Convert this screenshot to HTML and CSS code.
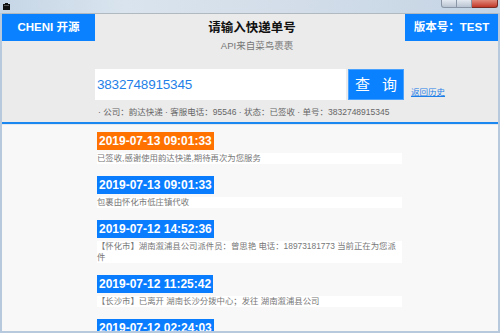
FILE: index.html
```html
<!DOCTYPE html>
<html lang="zh-CN">
<head>
    <meta charset="UTF-8">
    <title>快递查询</title>
    <link rel="stylesheet" href="styles.css">
</head>
<body>

<!--标题栏-->
<div class="titlebar">
    <svg class="app-icon" width="7" height="7" viewBox="0 0 7 7">
        <rect x="0" y="1" width="7" height="6" fill="#111"/>
        <rect x="2" y="0" width="3" height="2" fill="#111"/>
        <rect x="1" y="2" width="5" height="1" fill="#555"/>
    </svg>
    <div class="win-btns">
        <span class="win-btn win-min"></span>
        <span class="win-btn win-max"></span>
        <span class="win-btn win-close"></span>
    </div>
</div>

<div class="window">
    <!--上边的查询区域-->
    <div class="header">
        <div class="top-row">
            <div class="badge">CHENI 开源</div>
            <div class="title-box">
                <h1 class="title">请输入快递单号</h1>
                <p class="subtitle">API来自菜鸟裹裹</p>
            </div>
            <div class="badge">版本号：TEST</div>
        </div>

        <div class="search-row">
            <div class="search-input">3832748915345</div>
            <div class="search-btn">查 询</div>
            <a class="history-link" href="">返回历史</a>
        </div>

        <p class="info">· 公司：韵达快递 · 客服电话：95546 · 状态：已签收 · 单号：3832748915345</p>
    </div>

    <!--下边的物流记录-->
    <div class="timeline">
        <div class="entry">
            <span class="time time-last">2019-07-13 09:01:33</span>
            <p class="desc">已签收,感谢使用韵达快递,期待再次为您服务</p>
        </div>
        <div class="entry">
            <span class="time">2019-07-13 09:01:33</span>
            <p class="desc">包裹由怀化市低庄镇代收</p>
        </div>
        <div class="entry">
            <span class="time">2019-07-12 14:52:36</span>
            <p class="desc">【怀化市】湖南溆浦县公司派件员：曾思艳 电话：18973181773 当前正在为您派件</p>
        </div>
        <div class="entry">
            <span class="time">2019-07-12 11:25:42</span>
            <p class="desc">【长沙市】已离开 湖南长沙分拨中心；发往 湖南溆浦县公司</p>
        </div>
        <div class="entry">
            <span class="time">2019-07-12 02:24:03</span>
        </div>
    </div>
</div>

</body>
</html>
```

FILE: styles.css
```css
* {
    margin: 0;
    padding: 0;
    box-sizing: border-box;
}

html, body {
    width: 500px;
    height: 333px;
    overflow: hidden;
}

body {
    font-family: "Liberation Sans", "Noto Sans CJK SC", sans-serif;
    background-color: #c9d8e6;
    display: flex;
    flex-direction: column;
}

/*标题栏*/
.titlebar {
    height: 13px;
    display: flex;
    align-items: flex-start;
    background: linear-gradient(90deg, #c6d6e6 0%, #d9e4ee 25%, #d2dde9 60%, #c4d4e4 100%);
}

.app-icon {
    margin: 3px 0 0 3px;
}

.win-btns {
    margin-left: auto;
    margin-right: 2px;
    display: flex;
}

.win-btn {
    height: 8px;
    border: 1px solid #8a96a6;
    border-top: none;
    background: linear-gradient(#e4e9f0, #b9c4d2);
}

.win-min {
    width: 16px;
    border-radius: 0 0 0 3px;
}

.win-max {
    width: 15px;
    border-left: none;
}

.win-close {
    width: 26px;
    border-left: none;
    border-color: #7a2a22;
    border-radius: 0 0 3px 0;
    background: linear-gradient(#e08a7c, #c2392a);
}

/*窗口主体*/
.window {
    flex: 1;
    display: flex;
    flex-direction: column;
    border: 2px solid #b7c9dc;
    border-top: none;
    min-height: 0;
}

.header {
    height: 111px;
    background-color: #ebebeb;
    border-top: 1px solid #b0b8c0;
    border-bottom: 2px solid #1a86f0;
}

.top-row {
    display: flex;
    align-items: flex-start;
}

.badge {
    width: 93px;
    height: 27px;
    line-height: 27px;
    background-color: #0a82ff;
    color: #fff;
    font-size: 11.5px;
    font-weight: bold;
    text-align: center;
}

.title-box {
    flex: 1;
    text-align: center;
    padding-top: 6px;
}

.title {
    font-size: 12.5px;
    line-height: 16px;
    color: #111;
    padding-left: 4px;
}

.subtitle {
    font-size: 9.5px;
    line-height: 13px;
    color: #777;
    margin-top: 3px;
    padding-left: 14px;
}

.search-row {
    display: flex;
    align-items: flex-end;
    margin: 17px 0 0 93px;
}

.search-input {
    width: 251px;
    height: 31px;
    line-height: 31px;
    background-color: #fff;
    color: #1f7fe8;
    font-size: 13.5px;
    padding-left: 2px;
    letter-spacing: -0.2px;
}

.search-btn {
    width: 56px;
    height: 31px;
    margin-left: 2px;
    line-height: 29px;
    background-color: #0a82ff;
    border: 1px solid #4aa2ff;
    color: #fff;
    font-size: 15px;
    text-align: center;
    letter-spacing: 4px;
    text-indent: 4px;
}

.history-link {
    margin: 0 0 2px 7px;
    font-size: 8.5px;
    line-height: 11px;
    color: #1f7fe8;
}

.info {
    margin: 6px 0 0 96px;
    font-size: 8.5px;
    line-height: 12px;
    color: #666;
}

/*物流记录*/
.timeline {
    flex: 1;
    background-color: #f8f8f8;
    border-top: 1px solid #e2e8ee;
    padding: 6px 0 0 95px;
    overflow: hidden;
}

.entry {
    margin-bottom: 11px;
}

.time {
    display: inline-block;
    height: 18px;
    line-height: 18px;
    padding: 0 2px;
    background-color: #0a7dff;
    color: #fff;
    font-size: 12px;
    font-weight: bold;
}

.time-last {
    background-color: #ff7200;
}

.desc {
    width: 305px;
    margin-top: 3px;
    background-color: #fff;
    color: #777;
    font-size: 8.4px;
    line-height: 11px;
}
```
